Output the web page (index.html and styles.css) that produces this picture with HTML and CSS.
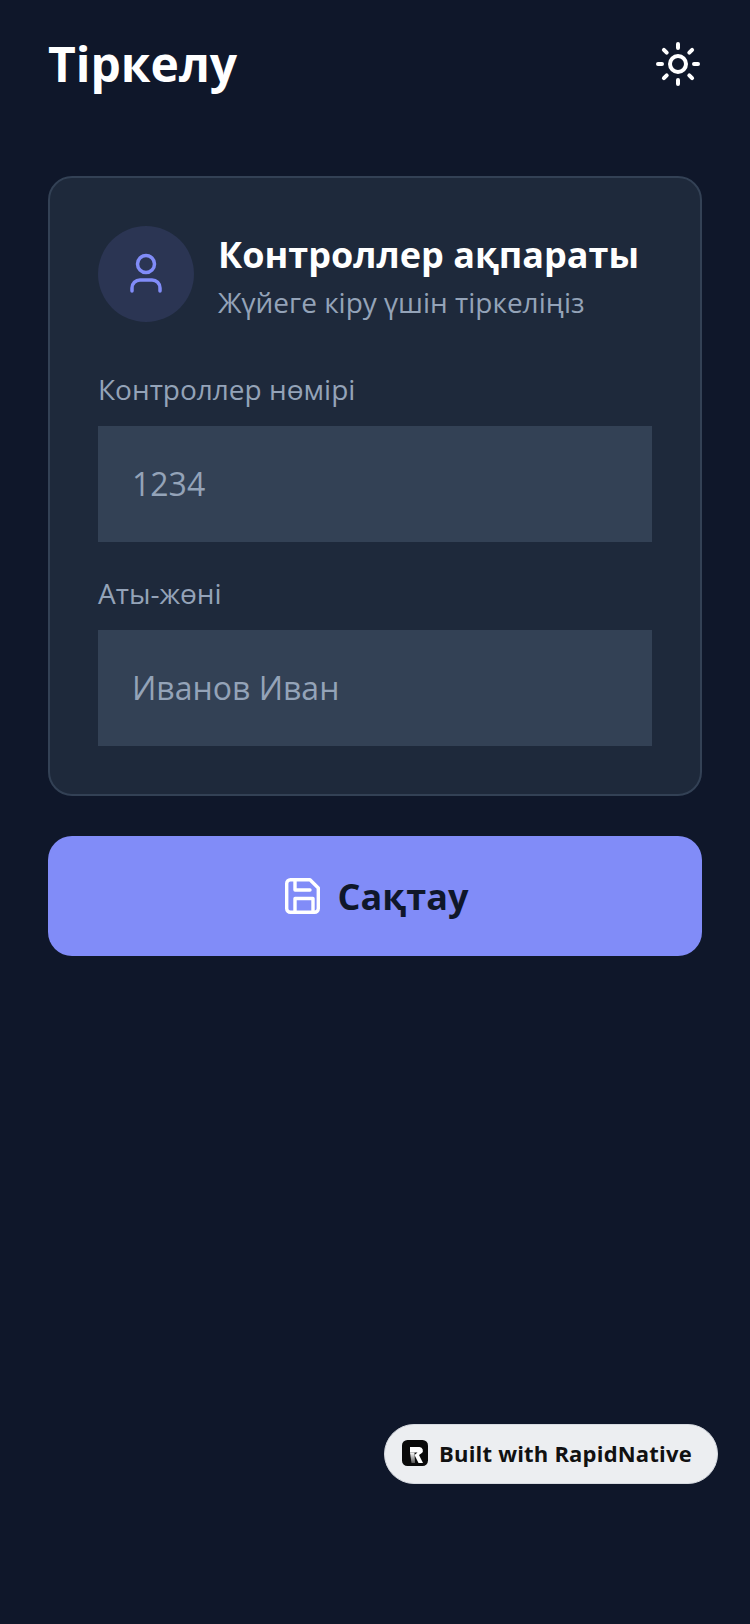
FILE: index.html
```html
<!DOCTYPE html>
<html lang="kk">
<head>
<meta charset="utf-8">
<title>Тіркелу</title>
<link rel="stylesheet" href="styles.css">
</head>
<body>
<main class="screen">
  <header class="header">
    <h1 class="title">Тіркелу</h1>
    <svg class="sun" viewBox="0 0 48 48" fill="none" stroke="#fff" stroke-width="4" stroke-linecap="round" stroke-linejoin="round">
      <circle cx="24" cy="24" r="8"/>
      <path d="M24 4v4M24 40v4M9.900 9.900l2.800 2.800M35.300 35.300l2.800 2.800M4 24h4M40 24h4M9.900 38.100l2.800-2.800M35.300 12.700l2.800-2.800"/>
    </svg>
  </header>
  <section class="card">
    <div class="card-head">
      <div class="avatar">
        <svg class="user" viewBox="0 0 48 48" fill="none" stroke="#818cf8" stroke-width="3.500" stroke-linecap="round" stroke-linejoin="round">
          <circle cx="24" cy="14" r="8.500"/>
          <path d="M10 41v-3a8 8 0 0 1 8-8h12a8 8 0 0 1 8 8v3"/>
        </svg>
      </div>
      <div class="head-text">
        <h2 class="card-title">Контроллер ақпараты</h2>
        <p class="card-sub">Жүйеге кіру үшін тіркеліңіз</p>
      </div>
    </div>
    <label class="label">Контроллер нөмірі</label>
    <div class="input">1234</div>
    <label class="label label-next">Аты-жөні</label>
    <div class="input">Иванов Иван</div>
  </section>
  <button class="save">
    <svg class="disk" viewBox="0 0 40 40" fill="none" stroke="#fff" stroke-width="3.400" stroke-linecap="round" stroke-linejoin="round">
      <path d="M8.500 3.700h19.500l8.300 8.300v20.500a3.800 3.800 0 0 1-3.800 3.800H8.500a3.800 3.800 0 0 1-3.800-3.800V7.500a3.800 3.800 0 0 1 3.800-3.800z"/>
      <path d="M13 3.700V14h15M13 36.300V22.500h18v13.800"/>
    </svg>
    <span>Сақтау</span>
  </button>
  <div class="badge">
    <svg class="logo" viewBox="0 0 26 26">
      <defs>
        <linearGradient id="stem" x1="0" y1="0" x2="0" y2="1">
          <stop offset="0" stop-color="#fff"/>
          <stop offset="1" stop-color="#555"/>
        </linearGradient>
      </defs>
      <rect width="26" height="26" rx="5.500" fill="#0a0a0a"/>
      <path d="M8 7h9.500a3.500 3.500 0 0 1 2 6.300L17 15l4 8h-4.500l-4-8 3-2.500H8z" fill="#fff"/>
      <path d="M8 12.500h4.500l.5 10.500H9.500z" fill="url(#stem)"/>
    </svg>
    <span class="badge-text">Built with RapidNative</span>
  </div>
</main>
</body>
</html>
```
FILE: styles.css
```css
* { box-sizing: border-box; margin: 0; padding: 0; }
html, body { height: 100%; }
body { background: #0f172a; font-family: "Open Sans", "Noto Sans", sans-serif; }
.screen { position: relative; width: 750px; height: 1624px; padding: 32px 48px 0; }
.header { display: flex; justify-content: space-between; align-items: center; height: 64px; margin-bottom: 80px; }
.title { font-size: 48px; line-height: 64px; font-weight: 700; color: #fff; }
.sun { width: 48px; height: 48px; }
.card { background: #1e293b; border: 2px solid #334155; border-radius: 24px; padding: 48px 48px 46px; height: 620px; }
.card-head { display: flex; align-items: center; gap: 24px; margin-bottom: 48px; }
.avatar { width: 96px; height: 96px; border-radius: 50%; background: #2b3553; display: flex; align-items: center; justify-content: center; }
.user { width: 48px; height: 48px; }
.head-text { padding-top: 5px; }
.card-title { font-size: 36px; line-height: 48px; font-weight: 700; color: #fff; margin-bottom: 3px; }
.card-sub { font-size: 28px; line-height: 40px; color: #94a3b8; }
.label { display: block; font-size: 28px; line-height: 38px; color: #94a3b8; margin-bottom: 18px; }
.label-next { margin-top: 32px; }
.input { height: 116px; background: #334155; color: #94a3b8; font-size: 32px; line-height: 116px; padding-left: 34px; }
.save { width: 100%; height: 120px; margin-top: 40px; border: 0; border-radius: 24px; background: #818cf8; display: flex; align-items: center; justify-content: center; gap: 16px; color: #0f172a; font-family: inherit; font-size: 36px; font-weight: 700; }
.disk { width: 40px; height: 40px; }
.badge { position: absolute; left: 384px; top: 1424px; width: 334px; height: 60px; padding: 0 0 2px 17px; border-radius: 30px; background: #eceef1; border: 1px solid #d6dae0; display: flex; align-items: center; gap: 11px; color: #111; font-size: 22px; font-weight: 700; }
.badge-text { letter-spacing: 0.2px; }
.logo { width: 26px; height: 26px; }
```
